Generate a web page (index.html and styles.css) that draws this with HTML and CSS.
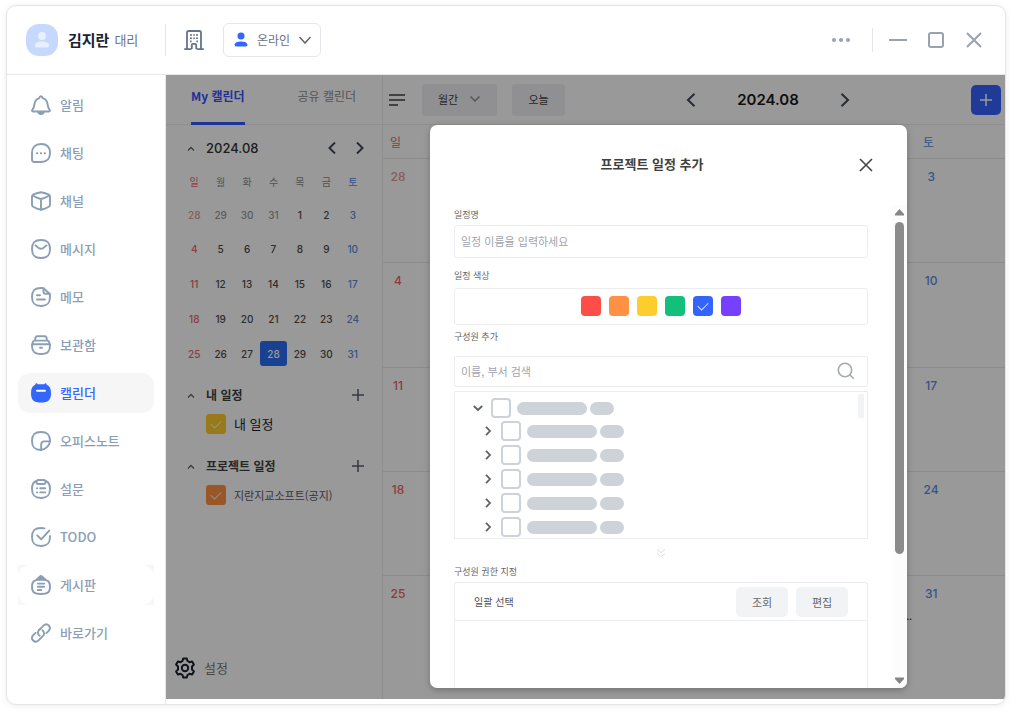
FILE: index.html
```html
<!DOCTYPE html>
<html lang="ko">
<head>
<meta charset="utf-8">
<meta name="viewport" content="width=device-width, initial-scale=1">
<title>캘린더</title>
<link rel="stylesheet" href="styles.css">
</head>
<body>
<div class="window">
  <header class="topbar">
    <div class="profile">
      <span class="avatar"><svg width="16" height="18" viewBox="0 0 16 18"><circle cx="8" cy="5" r="4"/><path d="M1 14.2C1.4 11.4 4 10.6 8 10.6s6.600.8 7 3.600c.2 1.600-1 2.400-2.600 2.400H3.600C2 16.600.8 15.800 1 14.200z"/></svg></span>
      <strong class="profile-name">김지란</strong>
      <span class="profile-rank">대리</span>
    </div>
    <button class="icon-btn building" aria-label="조직도"><svg width="20" height="20" viewBox="0 0 20 20"><path d="M3 19V2.800A1.800 1.800 0 0 1 4.800 1h10.400A1.800 1.800 0 0 1 17 2.800V19M.2 19.200h7.300M12.500 19.200h7.300M7.800 19v-4a1.200 1.200 0 0 1 1.200-1.200h2a1.200 1.200 0 0 1 1.200 1.200v4"/><path class="windows" d="M6 5h2M9.200 5h1.600M12 5h2M6 8.200h2M9.200 8.200h1.600M12 8.200h2M6 11.400h1.600M12.400 11.400h1.600"/></svg></button>
    <div class="status">
      <svg class="status-person" width="14" height="16" viewBox="0 0 14 16"><circle cx="7" cy="4" r="3.500"/><path d="M.6 12.500C1 10.200 3 9.400 7 9.400s6 .8 6.400 3.100c.2 1.500-.8 2.100-2.200 2.100H2.800C1.400 14.600.4 14 .6 12.500z"/></svg>
      <select class="status-select" aria-label="상태"><option>온라인</option></select>
      <svg class="caret" width="12" height="8" viewBox="0 0 12 8"><path d="M.5 1L6 7l5.500-6"/></svg>
    </div>
    <div class="window-controls">
      <button class="icon-btn dots" aria-label="더보기"><svg width="18" height="4" viewBox="0 0 18 4"><circle cx="2" cy="2" r="2"/><circle cx="9" cy="2" r="2"/><circle cx="16" cy="2" r="2"/></svg></button>
      <span class="divider"></span>
      <button class="icon-btn" aria-label="최소화"><svg width="18" height="18" viewBox="0 0 18 18"><path d="M0 9h18"/></svg></button>
      <button class="icon-btn" aria-label="최대화"><svg width="18" height="18" viewBox="0 0 18 18"><rect x="2" y="2" width="14" height="14" rx="2"/></svg></button>
      <button class="icon-btn" aria-label="닫기"><svg width="18" height="18" viewBox="0 0 18 18"><path d="M2 2l14 14M16 2L2 16"/></svg></button>
    </div>
  </header>

  <div class="body">
    <nav class="sidebar">
      <ul class="menu">
        <li><a class="menu-item" href="#alarm"><svg viewBox="0 0 20 20"><path d="M1.200 15.200c1.500-1.600 1.900-3.200 2.300-6.200C4 5.600 6 3.800 8.200 3.200 8.500 1.700 9.200 1.200 10 1.200s1.500.5 1.800 2c2.200.6 4.200 2.400 4.700 5.800.4 3 .8 4.600 2.300 6.200.4.700 0 1.300-.8 1.300H2c-.8 0-1.200-.6-.8-1.300z"/><path d="M7.300 17c.3 1.400 1.400 2 2.700 2s2.400-.6 2.700-2z"/></svg>알림</a></li>
        <li><a class="menu-item" href="#chat"><svg viewBox="0 0 20 20"><path d="M1 10c0-5.600 3.200-9 9-9s9 3.400 9 9-3.200 9-9 9H3.400C1.800 19 1 18.200 1 16.600z"/><path d="M6 10.200h.4M9.800 10.200h.4M13.600 10.200h.4"/></svg>채팅</a></li>
        <li><a class="menu-item" href="#channel"><svg viewBox="0 0 20 20"><path d="M10 1.200c3 .4 5.600 1.200 8 2.500.7.400 1 1 1 1.800v8.200c0 .9-.4 1.600-1.200 2.100-2.400 1.500-5 2.500-7.800 3-2.800-.5-5.400-1.500-7.800-3-.8-.5-1.200-1.200-1.200-2.100V5.500c0-.8.3-1.400 1-1.800 2.400-1.300 5-2.100 8-2.500z"/><path d="M2 4.800c2.600 1.600 5.200 2.600 8 3.200 2.800-.6 5.400-1.600 8-3.200M10 8v10.500"/></svg>채널</a></li>
        <li><a class="menu-item" href="#message"><svg viewBox="0 0 20 20"><path d="M10 1c6.500 0 9 2.500 9 9s-2.500 9-9 9-9-2.500-9-9 2.500-9 9-9z"/><path d="M4.500 6.400c2 1.200 2.800 3.400 5.500 3.400s3.500-2.200 5.500-3.400"/></svg>메시지</a></li>
        <li><a class="menu-item" href="#memo"><svg viewBox="0 0 20 20"><path d="M12.500 1.200C11.700 1 10.800 1 10 1c-6.500 0-9 2.500-9 9s2.500 9 9 9 9-2.500 9-9c0-1.200-.1-2.200-.4-3.200z"/><path d="M12.500 1.200v3.600c0 1.400.7 2 2 2h4.100M6 8.300h3M6 12.500h8"/></svg>메모</a></li>
        <li><a class="menu-item" href="#archive"><svg viewBox="0 0 20 20"><path d="M1 9.200h18c.3 6.800-2 9.800-9 9.800S.7 16 1 9.200z"/><path d="M1.600 8.800c0-2 .8-3.200 2.400-3.200h12c1.600 0 2.400 1.200 2.400 3.200M4 5.400l.4-2.600c.2-1 .8-1.600 1.800-1.600h7.600c1 0 1.600.6 1.800 1.600l.4 2.600M9 12.800h2"/></svg>보관함</a></li>
        <li><a class="menu-item is-active" href="#calendar" aria-current="page"><svg viewBox="0 0 20 20"><path class="solid" d="M5.400.2c.7 0 1 .4 1.200 1h6.800c.2-.6.500-1 1.200-1s1.100.6 1.200 1.500c3 1.300 4.200 4 4.200 8.600 0 6.700-2.800 9.300-10 9.300S0 17 0 10.300c0-4.600 1.200-7.300 4.200-8.600.1-.9.500-1.500 1.200-1.500z"/><path class="mark" d="M6 7.800h8"/></svg>캘린더</a></li>
        <li><a class="menu-item" href="#note"><svg viewBox="0 0 20 20"><path d="M19 10.500V10c0-6.500-2.500-9-9-9s-9 2.500-9 9 2.500 9 9 9c4.500-.6 8.500-4.200 9-8.500z"/><path d="M18.800 10.400h-5.600c-2 0-3 1-3 3v5.400"/></svg>오피스노트</a></li>
        <li><a class="menu-item" href="#survey"><svg viewBox="0 0 20 20"><path d="M5.500 2C2.200 2.900 1 5.500 1 10c0 6.500 2.500 9 9 9s9-2.500 9-9c0-4.500-1.200-7.100-4.500-8"/><rect x="5.500" y="1" width="9" height="4" rx="1.800"/><path d="M6 9.200h.2M9.200 9.200h5M6 13.400h.2M9.200 13.400h5"/></svg>설문</a></li>
        <li><a class="menu-item" href="#todo"><svg viewBox="0 0 20 20"><path d="M13.500 1.300C12.500 1 11.300 1 10 1c-6.500 0-9 2.500-9 9s2.500 9 9 9 9-2.500 9-9V9"/><path d="M6.200 8.400l4 3.900 8-8.700"/></svg>TODO</a></li>
        <li class="menu-backed"><a class="menu-item" href="#board"><svg viewBox="0 0 20 20"><path d="M10 4.600c6.500 0 9 1.500 9 7.200S16.500 19 10 19s-9-1.500-9-7.200 2.500-7.200 9-7.200z"/><path class="roof" d="M5.500 4.600L9 1.400c.6-.5 1.400-.5 2 0l3.500 3.200z"/><path d="M6.800 8.600h6.400M6.800 11.800h6.400M6.800 15h3.400"/></svg>게시판</a></li>
        <li><a class="menu-item" href="#link"><svg viewBox="0 0 20 20"><path d="M8.600 12.800c-2-1.500-2.200-4.100-.6-5.700l1.200-1.200M11.400 7.200c2 1.500 2.200 4.100.6 5.700l-4.500 4.500c-1.600 1.600-3.800 1.600-5.300.1s-1.500-3.700.1-5.300L4.600 9.900"/><path d="M8 7.100l4.500-4.500c1.600-1.600 3.800-1.600 5.300-.1s1.500 3.700-.1 5.300l-2.300 2.300"/></svg>바로가기</a></li>
      </ul>
    </nav>

    <main class="content">
      <aside class="panel">
        <div class="tabs">
          <button class="tab is-selected">My 캘린더</button>
          <button class="tab">공유 캘린더</button>
        </div>
        <div class="month-head">
          <svg class="fold" width="8" height="5" viewBox="0 0 8 5"><path d="M1 4.500l3-3 3 3"/></svg>
          <span class="month-label">2024.08</span>
          <button class="icon-btn arrow" aria-label="이전 달"><svg width="8" height="12" viewBox="0 0 8 12"><path d="M7 .5L1.500 6 7 11.500"/></svg></button>
          <button class="icon-btn arrow" aria-label="다음 달"><svg width="8" height="12" viewBox="0 0 8 12"><path d="M1 .5L6.500 6 1 11.500"/></svg></button>
        </div>
        <table class="mini">
          <thead><tr><th class="sun">일</th><th>월</th><th>화</th><th>수</th><th>목</th><th>금</th><th class="sat">토</th></tr></thead>
          <tbody>
            <tr><td class="sun out">28</td><td class="out">29</td><td class="out">30</td><td class="out">31</td><td>1</td><td>2</td><td class="sat">3</td></tr>
            <tr><td class="sun">4</td><td>5</td><td>6</td><td>7</td><td>8</td><td>9</td><td class="sat">10</td></tr>
            <tr><td class="sun">11</td><td>12</td><td>13</td><td>14</td><td>15</td><td>16</td><td class="sat">17</td></tr>
            <tr><td class="sun">18</td><td>19</td><td>20</td><td>21</td><td>22</td><td>23</td><td class="sat">24</td></tr>
            <tr><td class="sun">25</td><td>26</td><td>27</td><td><span class="today">28</span></td><td>29</td><td>30</td><td class="sat">31</td></tr>
          </tbody>
        </table>
        <section class="group">
          <div class="group-head">
            <svg class="fold" width="8" height="5" viewBox="0 0 8 5"><path d="M1 4.500l3-3 3 3"/></svg>
            <h2 class="group-title">내 일정</h2>
            <button class="icon-btn plus" aria-label="내 일정 추가"><svg width="12" height="12" viewBox="0 0 12 12"><path d="M6 0v12M0 6h12"/></svg></button>
          </div>
          <label class="group-item mine"><input class="check yellow" type="checkbox" checked>내 일정</label>
        </section>
        <section class="group">
          <div class="group-head">
            <svg class="fold" width="8" height="5" viewBox="0 0 8 5"><path d="M1 4.500l3-3 3 3"/></svg>
            <h2 class="group-title">프로젝트 일정</h2>
            <button class="icon-btn plus" aria-label="프로젝트 일정 추가"><svg width="12" height="12" viewBox="0 0 12 12"><path d="M6 0v12M0 6h12"/></svg></button>
          </div>
          <label class="group-item"><input class="check orange" type="checkbox" checked>지란지교소프트(공지)</label>
        </section>
        <button class="settings"><svg width="22" height="22" viewBox="0 0 22 22"><path d="M9.200 1.500h3.600l.7 2.500 2 1.200 2.600-.7 1.800 3.100-1.900 1.900v3l1.900 1.900-1.800 3.100-2.600-.7-2 1.200-.7 2.500H9.200L8.500 18l-2-1.200-2.600.7-1.800-3.100L4 12.500v-3L2.100 7.600l1.800-3.100 2.600.7L8.500 4z"/><circle cx="11" cy="11" r="3.200"/></svg>설정</button>
      </aside>

      <section class="calendar">
        <div class="toolbar">
          <div class="toolbar-left">
            <button class="icon-btn list" aria-label="목록"><svg width="16" height="14" viewBox="0 0 16 14"><path d="M0 2h16M0 7h16M0 12h9"/></svg></button>
            <div class="view">
              <select class="view-select" aria-label="보기"><option>월간</option></select>
              <svg width="10" height="6" viewBox="0 0 10 6"><path d="M.5.5L5 5 9.500.5"/></svg>
            </div>
            <button class="today-btn">오늘</button>
          </div>
          <div class="month-nav">
            <button class="icon-btn arrow" aria-label="이전 달"><svg width="10" height="14" viewBox="0 0 10 14"><path d="M8.500 .8L2 7l6.500 6.200"/></svg></button>
            <h1 class="month-title">2024.08</h1>
            <button class="icon-btn arrow" aria-label="다음 달"><svg width="10" height="14" viewBox="0 0 10 14"><path d="M1.500 .8L8 7l-6.500 6.200"/></svg></button>
          </div>
          <button class="add-btn" aria-label="일정 추가"><svg width="12" height="12" viewBox="0 0 12 12"><path d="M6 0v12M0 6h12"/></svg></button>
        </div>
        <div class="week head"><span class="day sun">일</span><span class="day sat">토</span></div>
        <div class="weeks">
          <div class="week"><span class="day sun out">28</span><span class="day sat">3</span></div>
          <div class="week"><span class="day sun">4</span><span class="day sat">10</span></div>
          <div class="week"><span class="day sun">11</span><span class="day sat">17</span></div>
          <div class="week"><span class="day sun">18</span><span class="day sat">24</span></div>
          <div class="week"><span class="day sun">25</span><span class="event">...</span><span class="day sat">31</span></div>
        </div>
      </section>

      <div class="overlay">
        <form class="dialog" role="dialog" aria-labelledby="dialog-title">
          <div class="dialog-head">
            <h2 class="dialog-title" id="dialog-title">프로젝트 일정 추가</h2>
            <button class="icon-btn dialog-close" type="button" aria-label="닫기"><svg width="14" height="14" viewBox="0 0 14 14"><path d="M1 1l12 12M13 1L1 13"/></svg></button>
          </div>
          <div class="dialog-main">
            <div class="fields">
              <label class="label" for="name">일정명</label>
              <input class="text-input" id="name" type="text" placeholder="일정 이름을 입력하세요">
              <span class="label" id="color-label">일정 색상</span>
              <div class="swatches" role="radiogroup" aria-labelledby="color-label">
                <input class="swatch red" type="radio" name="color" aria-label="빨강">
                <input class="swatch orange" type="radio" name="color" aria-label="주황">
                <input class="swatch yellow" type="radio" name="color" aria-label="노랑">
                <input class="swatch green" type="radio" name="color" aria-label="초록">
                <input class="swatch blue" type="radio" name="color" aria-label="파랑" checked>
                <input class="swatch violet" type="radio" name="color" aria-label="보라">
              </div>
              <label class="label members" for="search">구성원 추가</label>
              <div class="search">
                <input class="search-input" id="search" type="text" placeholder="이름, 부서 검색">
                <svg width="18" height="18" viewBox="0 0 18 18"><circle cx="8" cy="8" r="6.700"/><path d="M12.800 12.800l4 4"/></svg>
              </div>
              <div class="tree">
                <ul class="tree-list">
                  <li class="node root"><svg class="twist" width="10" height="10" viewBox="0 0 10 10"><path d="M.8 3L5 7l4.200-4"/></svg><input class="box" type="checkbox" aria-label="부서"><span class="pill long"></span><span class="pill"></span></li>
                  <li class="node"><svg class="twist" width="10" height="10" viewBox="0 0 10 10"><path d="M3 .8L7 5 3 9.200"/></svg><input class="box" type="checkbox" aria-label="구성원 1"><span class="pill long"></span><span class="pill"></span></li>
                  <li class="node"><svg class="twist" width="10" height="10" viewBox="0 0 10 10"><path d="M3 .8L7 5 3 9.200"/></svg><input class="box" type="checkbox" aria-label="구성원 2"><span class="pill long"></span><span class="pill"></span></li>
                  <li class="node"><svg class="twist" width="10" height="10" viewBox="0 0 10 10"><path d="M3 .8L7 5 3 9.200"/></svg><input class="box" type="checkbox" aria-label="구성원 3"><span class="pill long"></span><span class="pill"></span></li>
                  <li class="node"><svg class="twist" width="10" height="10" viewBox="0 0 10 10"><path d="M3 .8L7 5 3 9.200"/></svg><input class="box" type="checkbox" aria-label="구성원 4"><span class="pill long"></span><span class="pill"></span></li>
                  <li class="node"><svg class="twist" width="10" height="10" viewBox="0 0 10 10"><path d="M3 .8L7 5 3 9.200"/></svg><input class="box" type="checkbox" aria-label="구성원 5"><span class="pill long"></span><span class="pill"></span></li>
                </ul>
                <span class="tree-thumb"></span>
              </div>
              <svg class="more" width="10" height="10" viewBox="0 0 10 10"><path d="M1 1.500L5 4.500l4-3M1 5.500L5 8.500l4-3"/></svg>
              <span class="label rights">구성원 권한 지정</span>
              <div class="rights-box">
                <div class="rights-head">
                  <span class="rights-title">일괄 선택</span>
                  <button class="chip" type="button">조회</button>
                  <button class="chip" type="button">편집</button>
                </div>
              </div>
            </div>
            <div class="scrollbar">
              <svg width="9" height="7" viewBox="0 0 9 7"><path d="M4.500 0L9 5v1.500H0V5z"/></svg>
              <div class="track"><div class="thumb"></div></div>
              <svg width="9" height="7" viewBox="0 0 9 7"><path d="M4.500 7L9 2V.5H0V2z"/></svg>
            </div>
          </div>
        </form>
      </div>
    </main>
  </div>
</div>
</body>
</html>
```

FILE: styles.css
```css
* { box-sizing: border-box; }

body {
  margin: 0;
  padding: 5px 6px 7px;
  min-height: 100vh;
  display: flex;
  background: #fff;
  color: #222;
  font: 13px/20px "Noto Sans CJK KR", "Noto Sans", sans-serif;
}

h1, h2, ul { margin: 0; padding: 0; }
ul { list-style: none; }
svg { display: block; flex: none; fill: none; stroke: currentColor; }
button, input, select { margin: 0; font: inherit; color: inherit; }
button { padding: 0; border: 0; background: none; }
select { appearance: none; border: 0; background: none; padding: 0; outline: none; }

.icon-btn { display: flex; align-items: center; justify-content: center; }

.window {
  flex: 1;
  display: flex;
  flex-direction: column;
  min-width: 0;
  border: 1px solid #e3e5e8;
  border-radius: 10px;
  background: #fff;
  box-shadow: 0 1px 6px rgba(0, 0, 0, 0.08);
  overflow: hidden;
}

/* Top bar */
.topbar {
  display: flex;
  align-items: center;
  height: 69px;
  padding: 0 22px 0 19px;
  border-bottom: 1px solid #e8e8ea;
}
.profile {
  display: flex;
  align-items: center;
  width: 140px;
  height: 32px;
  border-right: 1px solid #e3e5e8;
}
.avatar {
  display: flex;
  align-items: center;
  justify-content: center;
  width: 32px;
  height: 32px;
  margin-right: 10px;
  border-radius: 13px;
  background: #c7d8ff;
}
.avatar svg { fill: #e8efff; stroke: none; }
.profile-name { font-size: 15px; font-weight: 700; color: #1c2030; margin-right: 5px; }
.profile-rank { color: #6b7280; }
.building { margin-left: 18px; color: #64748b; }
.building svg { stroke-width: 1.8; }
.building .windows { stroke-width: 1.6; }
.status {
  display: flex;
  align-items: center;
  width: 98px;
  height: 34px;
  margin-left: 19px;
  padding: 0 9px 0 10px;
  border: 1px solid #e3e5e8;
  border-radius: 6px;
  color: #5d6572;
}
.status-person { fill: #3366ff; stroke: none; margin-right: 9px; }
.status-select { flex: 1; min-width: 0; font-size: 12px; height: 24px; color: #6b7280; }
.caret { stroke-width: 1.5; }
.window-controls { display: flex; align-items: center; margin-left: auto; color: #9aa2b1; }
.window-controls svg { stroke-width: 2; }
.dots svg { fill: currentColor; stroke: none; }
.divider { width: 1px; height: 24px; margin: 0 16px 0 22px; background: #e3e5e8; }
.window-controls .icon-btn + .icon-btn { margin-left: 20px; }

.body { flex: 1; display: flex; min-height: 0; }

/* Sidebar */
.sidebar { width: 159px; padding: 10px 11px; border-right: 1px solid #e8e8ea; flex: none; }
.menu { display: flex; flex-direction: column; gap: 8px; }
.menu-item {
  display: flex;
  align-items: center;
  gap: 9px;
  height: 40px;
  padding: 0 0 1px 13px;
  border-radius: 12px;
  background: #fff;
  color: #8a9eb4;
  font-weight: 500;
  text-decoration: none;
}
.menu-item svg { width: 20px; height: 20px; stroke-width: 1.9; stroke-linecap: round; stroke-linejoin: round; }
.menu-backed { background: #f7f7f8; }
.menu-item.is-active { background: #f6f6f7; color: #3366ff; }
.menu-item .solid { fill: #3366ff; stroke: none; }
.menu-item .mark { stroke: #fff; }
.menu-item .roof { fill: currentColor; }

.content { position: relative; flex: 1; display: flex; min-width: 0; margin-bottom: 5px; }

/* Left calendar panel */
.panel {
  display: flex;
  flex-direction: column;
  width: 217px;
  flex: none;
  border-right: 1px solid #eee;
  color: #404040;
}
.tabs {
  display: flex;
  justify-content: space-between;
  height: 50px;
  padding: 0 26px 0 25px;
  border-bottom: 1px solid #eee;
}
.tab { height: 50px; padding-bottom: 6px; font-size: 12px; color: #8f8f8f; border-bottom: 3px solid transparent; }
.tab.is-selected { font-weight: 700; color: #3552ff; border-color: #3358ff; }
.month-head { display: flex; align-items: center; height: 20px; margin: 13px 14px 8px 21px; }
.fold { margin-right: 11px; color: #666; stroke-width: 1.4; }
.month-label { flex: 1; font-family: Inter, sans-serif; font-size: 13px; font-weight: 500; color: #333; }
.arrow { width: 16px; height: 20px; color: #414956; }
.arrow svg { stroke-width: 2; }
.arrow + .arrow { margin-left: 12px; }
.mini {
  width: 185px;
  margin-left: 15px;
  border-collapse: collapse;
  table-layout: fixed;
  font: 500 10px/12px Inter, "Noto Sans CJK KR", sans-serif;
  text-align: center;
}
.mini th { height: 32px; padding: 0; font-weight: 400; color: #8a8a8a; }
.mini td { height: 35px; padding: 0; color: #4c4c4c; }
.mini tr:first-child td { height: 33px; }
.mini .out { color: #999; }
.sun, .mini .sun { color: #e8646a; }
.sun.out, .mini .sun.out { color: #e29a9d; }
.sat, .mini .sat { color: #5b8be0; }
.mini .today {
  display: block;
  padding: 7px 0 6px;
  border-radius: 3px;
  background: #2a6bf2;
  color: #fff;
}
.group { padding: 14px 16px 0 21px; }
.group + .group { padding-top: 22px; }
.group-head { display: flex; align-items: center; height: 20px; margin-bottom: 9px; }
.group-title { flex: 1; font-size: 12px; font-weight: 700; }
.plus { width: 16px; height: 20px; color: #5b5f70; }
.plus svg { stroke-width: 1.5; }
.group-item { display: flex; align-items: center; height: 20px; padding-left: 19px; font-size: 11px; color: #5c5568; }
.group-item.mine { font-size: 13px; color: #1c2030; }
.check { appearance: none; display: grid; place-items: center; width: 20px; height: 20px; margin-right: 8px; border-radius: 3px; }
.check::after, .swatch:checked::after {
  content: "";
  width: 9px;
  height: 5px;
  margin-top: -3px;
  border: solid rgba(255, 255, 255, 0.8);
  border-width: 0 0 1px 1px;
  transform: rotate(-45deg);
}
.settings { display: flex; align-items: center; gap: 8px; margin: auto 0 21px 8px; height: 20px; color: #777; }
.settings svg { color: #1c2030; stroke-width: 2; stroke-linejoin: round; }

/* Month calendar */
.calendar { flex: 1; display: flex; flex-direction: column; min-width: 0; }
.toolbar {
  display: flex;
  align-items: center;
  justify-content: space-between;
  height: 50px;
  padding: 0 4px 0 6px;
  border-bottom: 1px solid #eee;
}
.toolbar-left { display: flex; align-items: center; }
.list { color: #6b6e76; }
.list svg { stroke-width: 2; }
.view {
  display: flex;
  align-items: center;
  width: 75px;
  height: 32px;
  margin: 0 15px 0 17px;
  padding: 0 17px 1px 16px;
  border-radius: 3px;
  background: #f0f1f5;
  color: #8c8f98;
}
.view-select { flex: 1; min-width: 0; font-size: 11px; color: #404040; }
.view svg { stroke-width: 1.5; }
.today-btn { width: 53px; height: 32px; padding-bottom: 2px; border-radius: 3px; background: #f0f1f5; font-size: 11px; color: #404040; }
.month-nav { display: flex; align-items: center; gap: 38px; }
.month-title { font: 600 15px/20px Inter, sans-serif; color: #1a1a1a; }
.add-btn {
  display: flex;
  align-items: center;
  justify-content: center;
  width: 30px;
  height: 30px;
  border-radius: 5px;
  background: #3562ff;
  color: #fff;
}
.add-btn svg { stroke-width: 1.5; }
.week { display: grid; grid-template-columns: repeat(7, 1fr); border-bottom: 1px solid #eaeaea; }
.week.head { height: 34px; align-items: center; font-size: 12px; }
.week.head .day { width: 25px; }
.weeks { flex: 1; display: grid; grid-template-rows: repeat(4, 1fr) 123px; min-height: 0; }
.weeks .week:last-child { border-bottom: 0; }
.weeks .day { padding-top: 8px; font: 500 12px/20px Inter, sans-serif; }
.day { width: 30px; text-align: center; }
.day.sun { grid-column: 1; }
.day.sat { grid-column: 7; }
.event { grid-column: 2 / 7; padding: 30px 4px 0 0; text-align: right; font-size: 10px; color: #222; }

/* Modal */
.overlay {
  position: absolute;
  inset: 0;
  display: flex;
  padding: 50px 98px 11px 264px;
  background: rgba(0, 0, 0, 0.4);
}
.dialog {
  flex: 1;
  display: flex;
  flex-direction: column;
  min-width: 0;
  border-radius: 7px;
  background: #fff;
  box-shadow: 0 2px 6px rgba(0, 0, 0, 0.25);
  overflow: hidden;
}
.dialog-head { display: flex; align-items: center; height: 80px; padding: 0 25px 0 24px; }
.dialog-title { flex: 1; padding-bottom: 2px; text-align: center; font-size: 13px; font-weight: 700; color: #404040; }
.dialog-close { width: 32px; height: 32px; color: #444; }
.dialog-close svg { stroke-width: 1.6; }
.dialog-main { flex: 1; display: flex; min-height: 0; }
.fields { flex: 1; display: flex; flex-direction: column; min-width: 0; padding: 4px 24px 0; }
.label { margin-bottom: 4px; font-size: 9px; line-height: 12px; color: #666; }
.text-input { height: 33px; margin-bottom: 12px; padding: 0 6px 2px; border: 1px solid #ededf0; border-radius: 3px; font-size: 11px; }
input::placeholder { color: #a0a3b0; opacity: 1; }
input { outline: none; }
.swatches {
  display: flex;
  align-items: center;
  justify-content: center;
  gap: 8px;
  height: 37px;
  margin: 2px 0 6px;
  padding: 0 1px 1px 0;
  border: 1px solid #ededf0;
  border-radius: 3px;
}
.swatch { appearance: none; display: grid; place-items: center; width: 20px; height: 20px; border-radius: 4px; }
.red { background: #ff4d47; }
.orange { background: #ff9144; }
.yellow { background: #fdcc2d; }
.green { background: #12bf7b; }
.blue { background: #3364ff; }
.violet { background: #7640ff; }
.label.members { margin-bottom: 13px; }
.search {
  display: flex;
  align-items: center;
  height: 31px;
  padding: 0 12px 2px 6px;
  border: 1px solid #ededf0;
  border-radius: 2px;
  color: #a3a8b5;
}
.search svg { stroke-width: 1.6; }
.search-input { flex: 1; min-width: 0; padding: 0; border: 0; background: none; font-size: 11px; }
.tree {
  display: flex;
  justify-content: space-between;
  height: 148px;
  margin-top: 4px;
  padding: 2px 3px 0 18px;
  border: 1px solid #ededf0;
}
.tree-list { padding-top: 3px; }
.node { display: flex; align-items: center; height: 24px; padding-left: 10px; color: #606060; }
.node.root { height: 22px; padding-left: 0; }
.twist { stroke-width: 1.8; }
.box { appearance: none; width: 20px; height: 20px; margin: 0 6px 0 8px; border: 2px solid #cdd2da; border-radius: 4px; background: #fff; }
.pill { width: 24px; height: 13px; border-radius: 7px; background: #ced2d9; }
.pill.long { width: 70px; margin-right: 3px; }
.tree-thumb { width: 6px; height: 24px; border-radius: 1px; background: #f2f3f5; }
.more { align-self: center; margin: 9px 0 8px; color: #dcdfe6; }
.rights-box { flex: 1; border: 1px solid #ededf0; border-bottom: 0; border-radius: 3px 3px 0 0; }
.rights-head { display: flex; align-items: center; gap: 8px; height: 38px; padding: 0 19px; border-bottom: 1px solid #ededf0; }
.rights-title { flex: 1; font-size: 10px; color: #505050; }
.chip { width: 52px; height: 30px; border-radius: 5px; background: #f2f3f5; font-size: 11px; color: #666; }
.scrollbar { display: flex; flex-direction: column; align-items: center; width: 15px; padding: 4px 0; background: #fcfcfc; }
.scrollbar svg { fill: #858585; stroke: none; }
.track { flex: 1; width: 9px; margin: 6px 0 0; }
.thumb { height: 73%; border-radius: 5px; background: #8b8b8b; }
```
